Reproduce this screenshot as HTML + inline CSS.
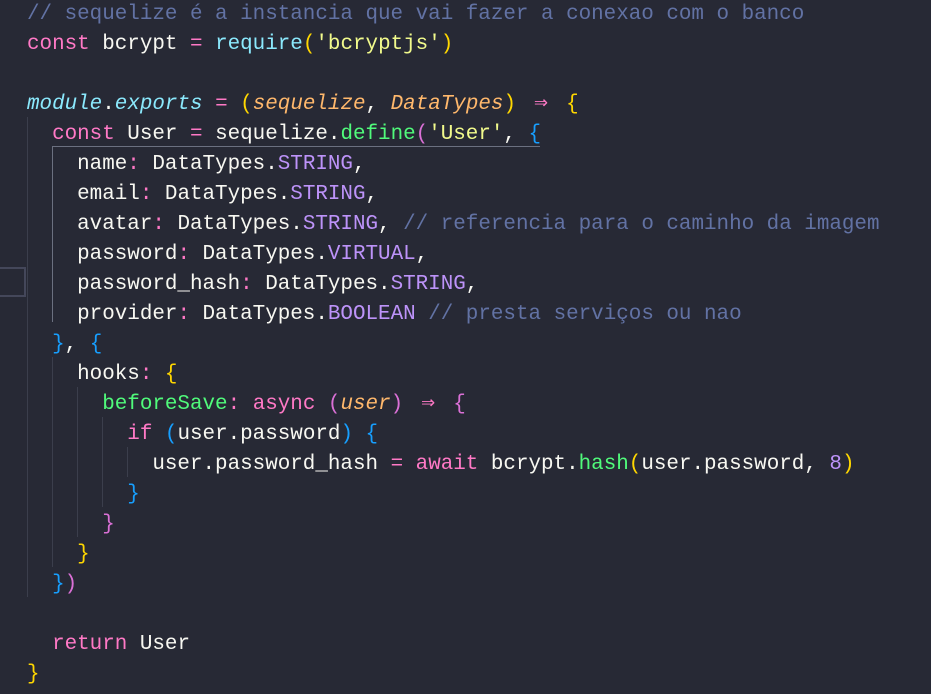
<!DOCTYPE html>
<html><head><meta charset="utf-8"><style>
html,body{margin:0;padding:0;background:#272935;width:931px;height:694px;overflow:hidden}
.code{position:absolute;left:27px;top:0px;font-family:"Liberation Mono","DejaVu Sans Mono",monospace;font-size:20.9px;line-height:30px;color:#f8f8f2;white-space:pre}
.k{color:#ff79c6}.f{color:#50fa7b}.s{color:#f1fa8c}.c{color:#6272a4}.p{color:#ffb86c;font-style:italic}
.i{color:#8be9fd;font-style:italic}.n{color:#bd93f9}.g{color:#ffd700}.o{color:#da70d6}.b{color:#179fff}
.r{color:#8be9fd}
.a{color:#ff79c6;font-family:"DejaVu Sans Mono",monospace;font-size:23px;display:inline-block;width:25px;text-align:center;line-height:20px}
.v{position:absolute;width:1px;background:#3b3e4c}
</style></head><body>
<div class="v" style="left:27px;top:117px;height:480px"></div>
<div class="v" style="left:52px;top:357px;height:210px"></div>
<div class="v" style="left:77px;top:387px;height:150px"></div>
<div class="v" style="left:102px;top:417px;height:90px"></div>
<div class="v" style="left:127px;top:447px;height:30px"></div>
<div style="position:absolute;left:52px;top:146px;width:488px;height:176px;border-left:1px solid #6b7080;border-top:1px solid #6b7080;box-sizing:border-box"></div>
<div style="position:absolute;left:-2px;top:267px;width:28px;height:30px;border:2px solid #44475a;box-sizing:border-box"></div>
<div class="code"><span class="c">// sequelize é a instancia que vai fazer a conexao com o banco</span>
<span class="k">const</span> bcrypt <span class="k">=</span> <span class="r">require</span><span class="g">(</span><span class="s">'bcryptjs'</span><span class="g">)</span>

<span class="i">module</span>.<span class="i">exports</span> <span class="k">=</span> <span class="g">(</span><span class="p">sequelize</span>, <span class="p">DataTypes</span><span class="g">)</span> <span class="a">⇒</span> <span class="g">{</span>
  <span class="k">const</span> User <span class="k">=</span> sequelize.<span class="f">define</span><span class="o">(</span><span class="s">'User'</span>, <span class="b">{</span>
    name<span class="k">:</span> DataTypes.<span class="n">STRING</span>,
    email<span class="k">:</span> DataTypes.<span class="n">STRING</span>,
    avatar<span class="k">:</span> DataTypes.<span class="n">STRING</span>, <span class="c">// referencia para o caminho da imagem</span>
    password<span class="k">:</span> DataTypes.<span class="n">VIRTUAL</span>,
    password_hash<span class="k">:</span> DataTypes.<span class="n">STRING</span>,
    provider<span class="k">:</span> DataTypes.<span class="n">BOOLEAN</span> <span class="c">// presta serviços ou nao</span>
  <span class="b">}</span>, <span class="b">{</span>
    hooks<span class="k">:</span> <span class="g">{</span>
      <span class="f">beforeSave</span><span class="k">:</span> <span class="k">async</span> <span class="o">(</span><span class="p">user</span><span class="o">)</span> <span class="a">⇒</span> <span class="o">{</span>
        <span class="k">if</span> <span class="b">(</span>user.password<span class="b">)</span> <span class="b">{</span>
          user.password_hash <span class="k">=</span> <span class="k">await</span> bcrypt.<span class="f">hash</span><span class="g">(</span>user.password, <span class="n">8</span><span class="g">)</span>
        <span class="b">}</span>
      <span class="o">}</span>
    <span class="g">}</span>
  <span class="b">}</span><span class="o">)</span>

  <span class="k">return</span> User
<span class="g">}</span></div>
</body></html>
